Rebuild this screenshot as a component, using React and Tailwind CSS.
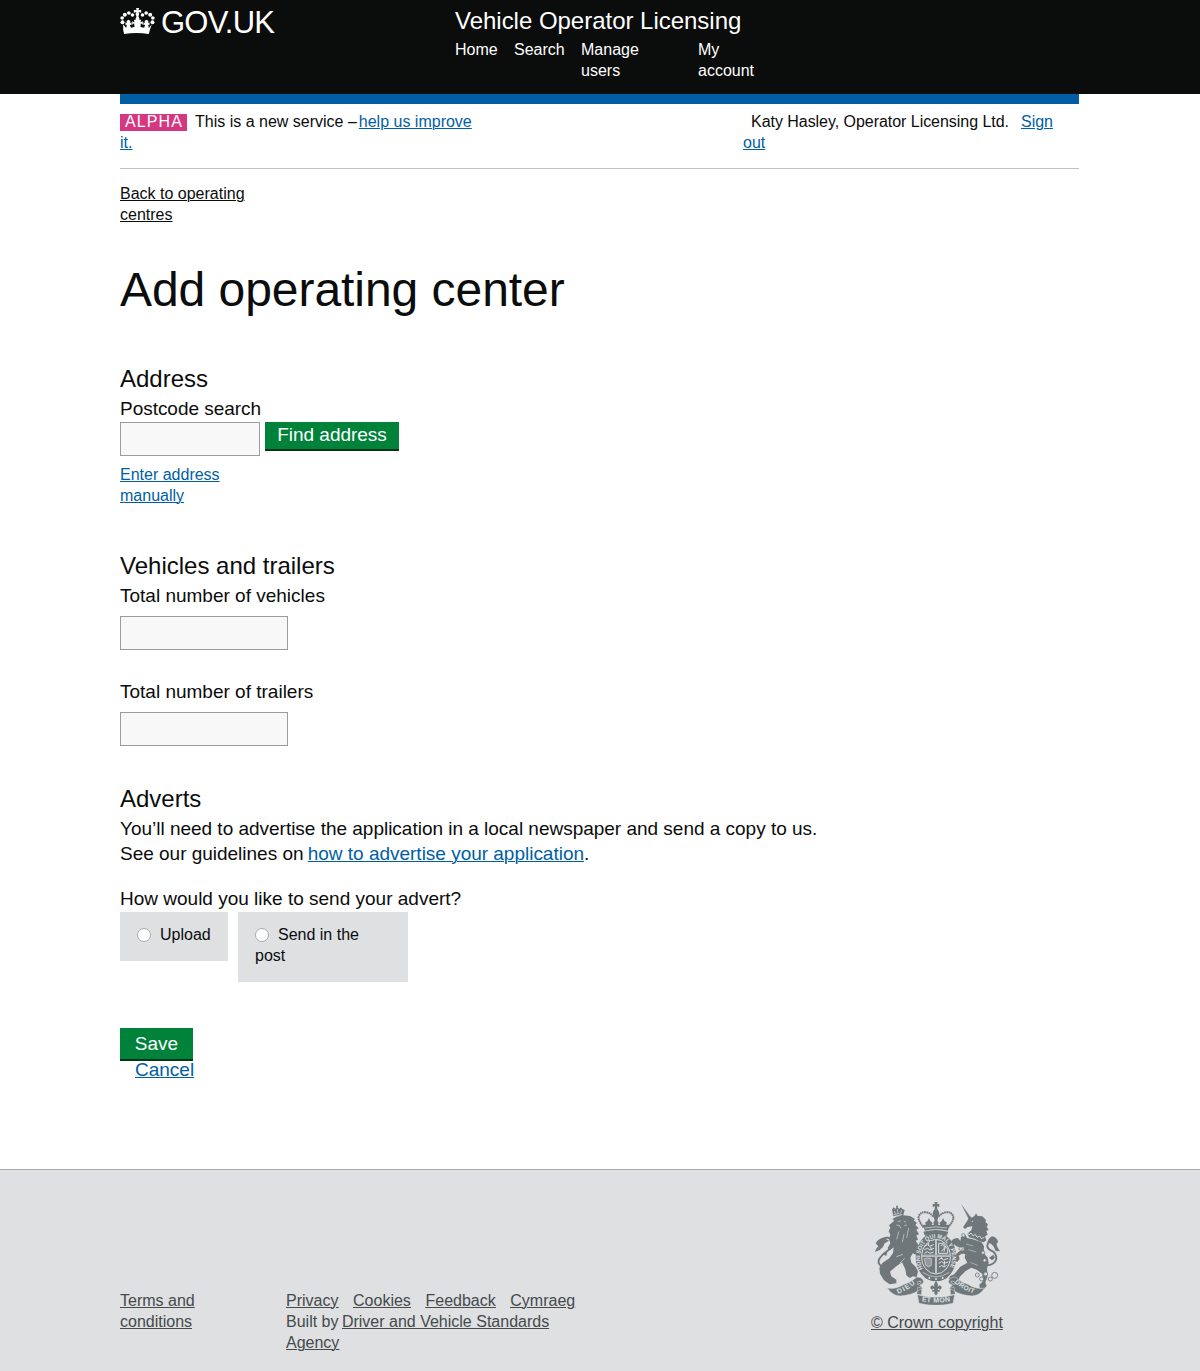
import React from "react";

const link = "text-[#005ea5] underline decoration-1 underline-offset-1";

function Crown() {
  return (
    <svg className="h-[26px] w-[35px]" viewBox="0 0 104 78" fill="#fff">
      <path d="M48 0h9l-2 7 8-2v9l-8-2 2 6-2 8 3 6-2 7h-8l-2-7 3-6-3-8 3-6-8 2V5l8 2z" />
      <circle cx="37" cy="21" r="5.5" />
      <circle cx="67" cy="21" r="5.5" />
      <circle cx="26" cy="15" r="5.5" />
      <circle cx="78" cy="15" r="5.5" />
      <circle cx="14" cy="20" r="6" />
      <circle cx="90" cy="20" r="6" />
      <circle cx="6" cy="30" r="5.5" />
      <circle cx="98" cy="30" r="5.5" />
      <circle cx="7" cy="43" r="6" />
      <circle cx="97" cy="43" r="6" />
      <path d="M9 49l9 11 2-10-4 1v-8l5 2-2-6 6-4 6 4-2 6 5-2v8l-5-1 3 9 11-2-1-11-6 4V40l7 3-2-8h22l-2 8 7-3v10l-6-4-1 11 11 2 3-9-5 1v-8l5 2-2-6 6-4 6 4-2 6 5-2v8l-4-1 2 10 9-11-6 17-3 12q-37-6-74 0l-3-12z" />
    </svg>
  );
}

function RoyalArms() {
  return (
    <svg className="h-[104px] w-[125px]" viewBox="45 33 375 312" fill="#6f777b">
      <g>
        <path d="M96 60l4-8 6 5 3-5-1-5h6l-1 5 4 5 6-5 4 5 7 3-5 19q-14-6-29 0z" />
        <path d="M103 63l3 8m6-13l2 12m11-9l-3 9M101 74q13-6 26 0" fill="none" stroke="#dee0e2" strokeWidth="2" />
        <path d="M103 92l-6-5 12-7 21-4 20 2 15 9-4 4 10 8-5 6 10 10-7 4 8 14-8 3 5 13-7 3 10 15-6 9 1 20-14-6-7 13 3 15 13 12 7 14-4 18-11-3-10 5-10-8-3-18-10-21-20 14-16 14 4 14 15 10v11l-20 3-17-12-12-20-2-18 10-15 20-13 11-16 2-17-13 10-5-8 8-14-4-12 4-14-5-10 5-11-4-7z" />
        <path d="M113 95l10-2m8 0l7 4M109 105l9 1 5 9m10-8l8-2m-24 19l-7 24m36-34l-6 30m-8-12l-5 25m-18 43l20-7m5 12l-14 14" fill="none" stroke="#dee0e2" strokeWidth="1.8" />
        <path d="M72 234Q47 222 60 203q6-9 19-18 20-14 15-32-5-13-18-9" fill="none" stroke="#6f777b" strokeWidth="5.5" />
        <path d="M45 186q4-12 10-17l-8-9q9-18 35-20l-3 8 8 4-13 8-5 11-10 9zM68 192l14-7-3 13z" />
      </g>
      <g>
        <path d="M303 41l31 43-7 5z" />
        <path d="M305 46l25 39" stroke="#dee0e2" strokeWidth=".8" strokeDasharray="2 3" />
        <path d="M309 112l10-15 6-10 4-8 7 4 8-6 4-7 5 8 14 1 11 11-2 6 8 7-4 8 6 8-7 4 4 11-8 5 4 12-8 6-13-3-14-8-17-4-5-11 12-10 3-12-14 2-8 6z" />
        <circle cx="337" cy="94" r="2" fill="#dee0e2" />
        <path d="M321 126l6 9 6-6 6 9 7-5 5 9 8-4 5 8 9-4" fill="none" stroke="#dee0e2" strokeWidth="2.5" />
        <path d="M303 141l14-5 4 8 18 4 26 9 7 12-1 20 12 14 3 16-5 17 2 22-7 20 4 9-8 10-13-4-1-9 10-9-1-23-17-13-16-6-18 11-17 17-4 12-17 3-11-8 3-10 13-5 17-22 22-13-8-15 2-11-11-1-9 6 3 9-7 10-9-5 1-15 14-12 14-4-2-8-18-2-10-7 1 8-8-4-3-12 9-9 13-2 7 9z" />
        <path d="M318 162l22 6m-15 11l24 7m-18 31l22 9" fill="none" stroke="#dee0e2" strokeWidth="1.5" />
        <path d="M380 226q23 0 29-19 1-18-15-25-17-8-10-22 8-8 15 0" fill="none" stroke="#6f777b" strokeWidth="5.5" />
        <path d="M382 160q1-14 14-21 17 4 18 18l-5 5 5 13 6 9-13-1-7-15-10-9zM387 203l13-9 5 9-9 8z" />
        <g fill="#dee0e2" stroke="#6f777b" strokeWidth="2.5">
          <circle cx="352" cy="255" r="6" />
          <circle cx="365" cy="267" r="6" />
          <circle cx="391" cy="267" r="6" />
          <circle cx="404" cy="256" r="9" />
          <circle cx="377" cy="252" r="6" />
          <circle cx="310" cy="136" r="5" />
          <circle cx="302" cy="176" r="5" />
          <circle cx="369" cy="188" r="5" />
          <circle cx="374" cy="211" r="5" />
        </g>
      </g>
      <g>
        <path d="M223 36h10l-2 7 7-2v10l-7-2 1 9q6 6 6 12l-6 22h-8l-6-22q0-6 6-12l1-9-7 2V41l7 2z" />
        <path d="M191 112Q170 87 178 76q6-12 21-9 14 2 22 15M264 112q22-25 14-36-6-12-21-9-14 2-22 15" fill="none" stroke="#6f777b" strokeWidth="6" strokeDasharray="5 1.5" />
        <path d="M188 105l10-1-3-6 8-6 4-8 4 9 7 6-3 6 7-1-2-7 8-9 8 9-2 7 7 1-3-6 7-6 4-9 4 8 8 6-3 6 10 1-4 17q-34-8-69 0z" />
        <path d="M194 114q34-7 67 0" fill="none" stroke="#dee0e2" strokeWidth="2" />
        <path d="M190 125q37-10 75 0l-5 12h-65z" />
      </g>
      <ellipse cx="228" cy="201" rx="61" ry="73" />
      <ellipse cx="228" cy="200" rx="43" ry="52" fill="none" stroke="#dee0e2" strokeWidth="3" />
      <path d="M228 149v101M186 197h84" stroke="#dee0e2" strokeWidth="6" />
      <path d="M228 149v101M186 197h84" stroke="#6f777b" strokeWidth="1.5" />
      <g fill="none" stroke="#dee0e2" strokeWidth="3">
        <path d="M194 169l8-5 7 5 12-5m-28 15l10-4 7 5 12-5m-29 15l9-5 8 5 11-4m-17-28l3 8m5 4l2 11" />
        <path d="M236 210l7-6 8 6 13-5m-28 15l9-5 7 5 13-4m-28 15l8-4 7 4 8-5m-16-25l3 8m7 4l-2 15" />
        <path d="M236 160h14l13 18v12h-27zM242 166q10-4 11 5t-9 12m12-14l-4 16" />
        <path d="M192 206q11-5 22 0v20q-9 9-16 0zM198 206v22m6-24v28m6-28v24" strokeWidth="2" />
      </g>
      <defs>
        <path id="garter" d="M189 236A48 58 0 1 1 267 236" />
        <path id="ribbonLeft" d="M114 312Q146 300 169 278" />
        <path id="ribbonMid" d="M185 334Q228 341 272 334" />
        <path id="ribbonRight" d="M283 278Q309 300 345 312" />
      </defs>
      <g fill="#dee0e2" className="font-['Liberation_Sans'] font-bold">
        <text fontSize="18">
          <textPath href="#garter" textLength="232" lengthAdjust="spacingAndGlyphs">HONI SOIT QUI MAL Y PENSE</textPath>
        </text>
      </g>
      <path d="M186 246q42 28 84 0l-9 18q-33 20-66 0z" />
      <path d="M188 247q40 27 80 0" fill="none" stroke="#dee0e2" strokeWidth="2" />
      <g fill="#dee0e2">
        <circle cx="208" cy="264" r="3" />
        <circle cx="228" cy="267" r="3" />
        <circle cx="248" cy="264" r="3" />
      </g>
      <path
        d="M82 294Q106 299 130 284q28-10 40-23 17 0 21 13-1 10-12 11l10 11-10 4q-24 16-59 18-26-3-38-24zM374 294q-24 5-48-10-28-10-40-23-17 0-21 13 1 10 12 11l-10 11 10 4q24 16 59 18 26-3 38-24zM172 314q56 15 112 0l-5 26q-51 12-102 0zM174 291l12 4-2 20-14-3zM282 291l-12 4 2 20 14-3z"
        stroke="#dee0e2"
        strokeWidth="1.5"
      />
      <path d="M171 277q11-7 13-1-3 7-14 7M285 277q-11-7-13-1 3 7 14 7" fill="none" stroke="#dee0e2" strokeWidth="2" />
      <g fill="#dee0e2" className="font-['Liberation_Sans'] font-bold">
        <text fontSize="21">
          <textPath href="#ribbonLeft" textLength="61">DIEU</textPath>
        </text>
        <text fontSize="21">
          <textPath href="#ribbonMid" textLength="86">ET MON</textPath>
        </text>
        <text fontSize="20">
          <textPath href="#ribbonRight" textLength="67">DROIT</textPath>
        </text>
      </g>
      <path d="M228 274q9 9 4 18 4-9 11-4 5 7-4 12l-2-5-5 5h7v5h-7l1 6-5 5-5-5 1-6h-7v-5h7l-5-5-2 5q-9-5-4-12 7-5 11 4-5-9 4-18z" />
    </svg>
  );
}

function Field({ label }) {
  return (
    <label className="block h-24">
      <span className="block h-[33px] leading-[25px]">{label}</span>
      <input className="block h-[34px] w-[168px] border border-[#9b9c9c] bg-[#f8f8f8]" />
    </label>
  );
}

function Radio() {
  return <span className="mr-[9px] inline-block size-[14px] rounded-full border border-[#aaa] bg-white align-[-2px]" />;
}

export default function App() {
  return (
    <div className="h-[1371px] overflow-hidden bg-white font-['Liberation_Sans',Arial,sans-serif] text-[19px] leading-[25px] text-[#0b0c0c]">
      <header className="h-[94px] bg-[#0b0c0c] text-white">
        <div className="mx-auto flex w-[960px]">
          <div className="flex w-[335px] gap-[6px] pt-2">
            <Crown />
            <span className="text-[31px] leading-[29px] tracking-[-0.75px]">GOV.UK</span>
          </div>
          <div className="pt-[6px]">
            <div className="text-[24px] leading-[30px] tracking-[-0.02px]">Vehicle Operator Licensing</div>
            <nav className="flex pt-[3px] text-[16px] leading-[21px]">
              <a className="w-[59px]">Home</a>
              <a className="w-[67px]">Search</a>
              <a className="w-[117px]">Manage<br />users</a>
              <a>My<br />account</a>
            </nav>
          </div>
        </div>
      </header>

      <div className="mx-auto h-[1075px] w-[960px]">
        <div className="mr-px h-[10px] bg-[#005ea5]" />
        <div className="mr-px flex h-[65px] border-b border-[#bfc1c3] pt-[7px] text-[16px] leading-[21px]">
          <div className="w-[623px]">
            <span className="mr-2 inline-block h-[17px] bg-[#d53880] pl-[5px] pr-1 leading-[16px] tracking-[1.1px] text-white">ALPHA</span>
            This is a new service –<a className={"ml-[2px] " + link}>help us improve</a>
            <br />
            <a className={link}>it.</a>
          </div>
          <div>
            <span className="ml-2 mr-3 tracking-[-0.04px]">Katy Hasley, Operator Licensing Ltd.</span>
            <a className={link}>Sign<br />out</a>
          </div>
        </div>

        <a className="mt-[14px] block text-[16px] leading-[21px] underline decoration-1 underline-offset-1">
          Back to operating<br />centres
        </a>
        <h1 className="mt-[40px] h-[99px] text-[48px] leading-[50px] tracking-[-0.05px]">Add operating center</h1>

        <section className="h-[187px]">
          <h2 className="text-[24px] leading-[30px]">Address</h2>
          <div className="pt-[2px] leading-[25px] tracking-[-0.03px]">Postcode search</div>
          <div className="mt-px flex items-start gap-[5px]">
            <input className="h-[34px] w-[140px] border border-[#9b9c9c] bg-[#f8f8f8]" />
            <button className="h-[29px] w-[134px] border-b-2 border-[#003618] bg-[#00823b] pb-[2px] leading-[25px] tracking-[-0.03px] text-white">Find address</button>
          </div>
          <a className={"mt-2 block text-[16px] leading-[21px] " + link}>Enter address<br />manually</a>
        </section>

        <section className="h-[233px]">
          <h2 className="mb-[2px] text-[24px] leading-[30px]">Vehicles and trailers</h2>
          <Field label="Total number of vehicles" />
          <Field label="Total number of trailers" />
        </section>

        <section>
          <h2 className="mb-[2px] text-[24px] leading-[30px]">Adverts</h2>
          <p className="tracking-[-0.015px]">
            You’ll need to advertise the application in a local newspaper and send a copy to us.<br />
            See our guidelines on <a className={"-ml-px " + link}>how to advertise your application</a>.
          </p>
          <p className="mt-5">How would you like to send your advert?</p>
          <div className="mt-px flex h-[116px] items-start gap-[10px] text-[16px] leading-[21px]">
            <label className="h-[49px] w-[108px] bg-[#dee0e2] pl-[17px] pt-3"><Radio />Upload</label>
            <label className="h-[70px] w-[170px] bg-[#dee0e2] pl-[17px] pt-3"><Radio />Send in the<br />post</label>
          </div>
          <button className="block h-[33px] w-[73px] border-b-2 border-[#003618] bg-[#00823b] text-white">Save</button>
          <a className={"-mt-1 ml-[15px] block w-max " + link}>Cancel</a>
        </section>
      </div>

      <footer className="h-[202px] border-t border-[#a1acb2] bg-[#dee0e2] text-[16px] leading-[21px] text-[#454a4c]">
        <div className="mx-auto flex w-[960px]">
          <a className="w-[166px] pt-[120px] underline decoration-1 underline-offset-1">Terms and<br />conditions</a>
          <div className="w-[585px] pt-[120px]">
            <div className="flex gap-[14.6px] underline decoration-1 underline-offset-1">
              <a>Privacy</a><a>Cookies</a><a>Feedback</a><a>Cymraeg</a>
            </div>
            Built by <a className="-ml-px underline decoration-1 underline-offset-1">Driver and Vehicle Standards<br />Agency</a>
          </div>
          <div className="pt-[31px]">
            <div className="ml-1"><RoyalArms /></div>
            <a className="mt-[7px] block underline decoration-1 underline-offset-1">© Crown copyright</a>
          </div>
        </div>
      </footer>
    </div>
  );
}
